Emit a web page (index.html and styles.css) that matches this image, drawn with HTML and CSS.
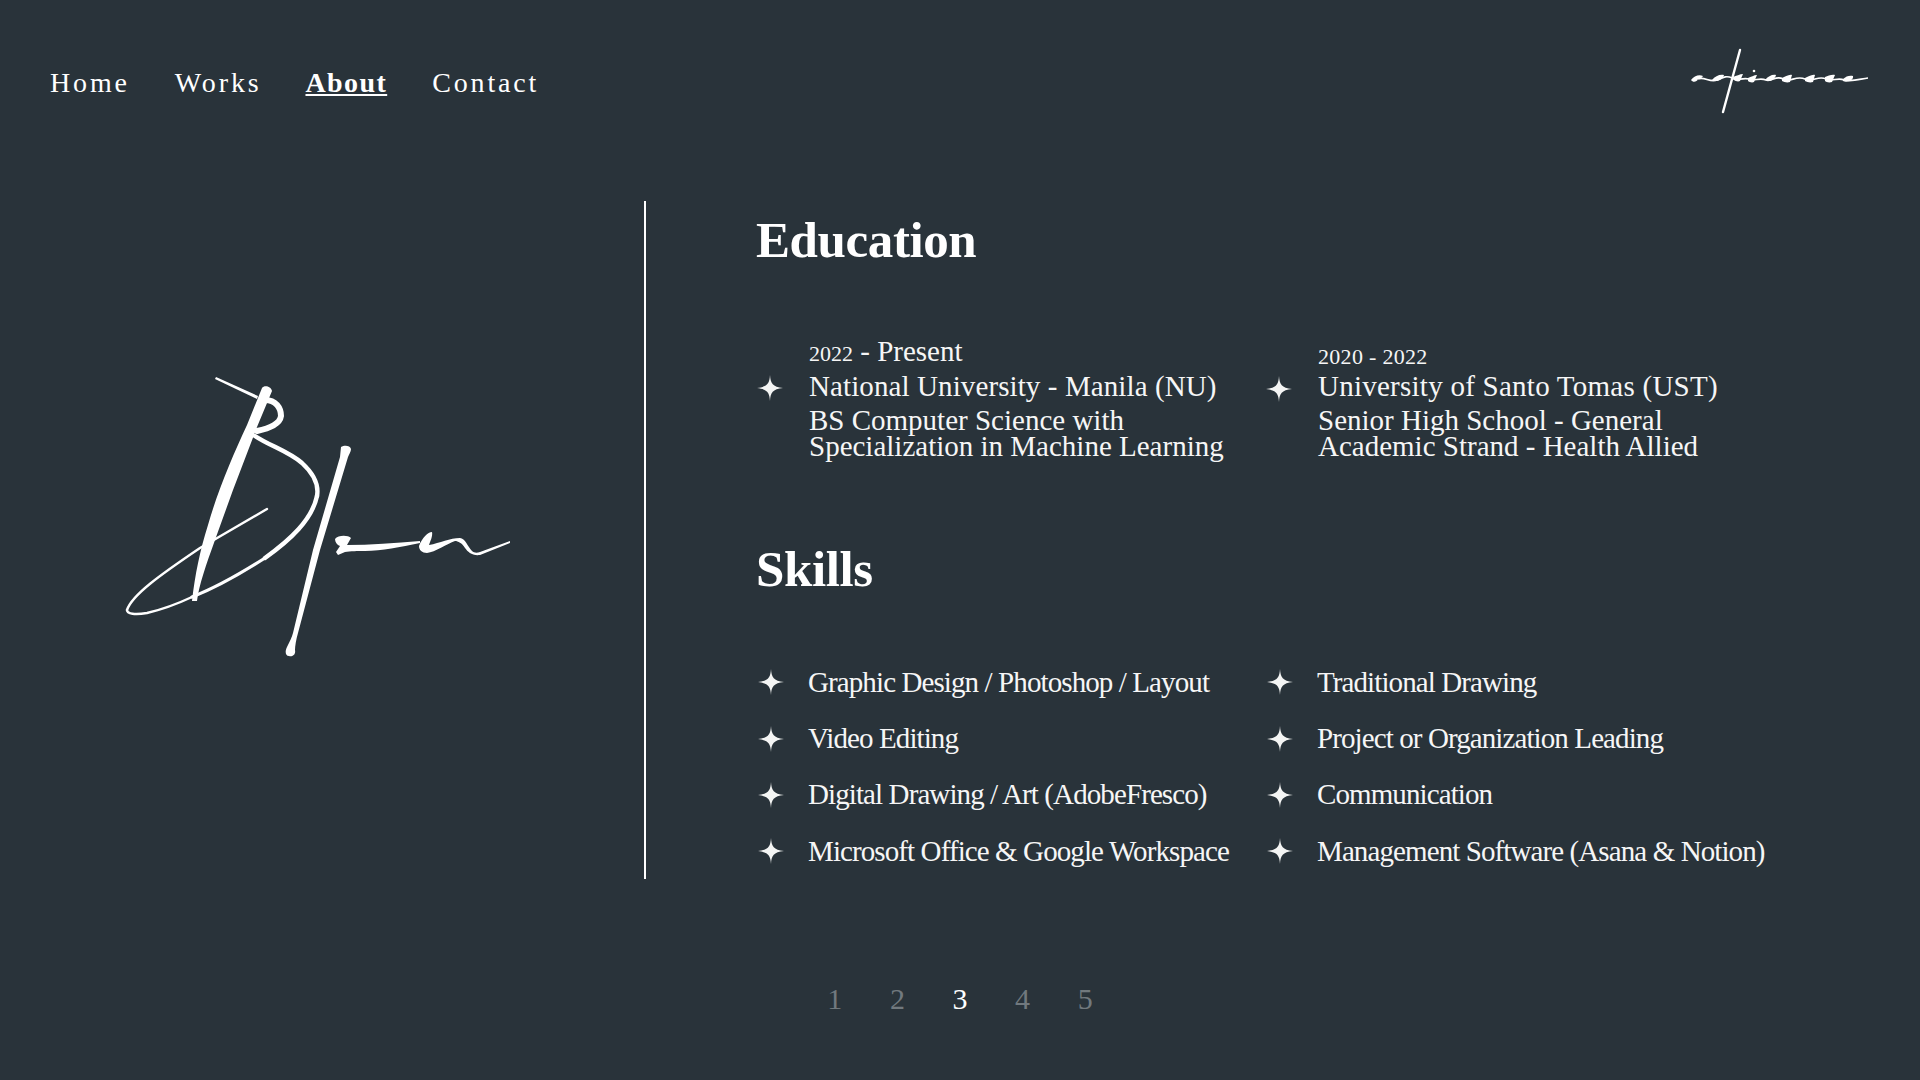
FILE: index.html
```html
<!DOCTYPE html>
<html lang="en">
<head>
  <meta charset="UTF-8" />
  <meta name="viewport" content="width=device-width, initial-scale=1" />
  <title>About</title>
  <link rel="stylesheet" href="styles.css">
</head>
<body>
  <svg class="defs" width="0" height="0">
    <symbol id="star" viewBox="0 0 26 26">
      <path d="M13 0 C13.6 8.5 15.5 11.8 26 13 C15.5 14.2 13.6 17.5 13 26 C12.4 17.5 10.5 14.2 0 13 C10.5 11.8 12.4 8.5 13 0 Z" />
    </symbol>
  </svg>

  <header class="topbar">
    <nav class="menu">
      <a href="#">Home</a>
      <a href="#">Works</a>
      <a href="#" class="active">About</a>
      <a href="#">Contact</a>
    </nav>
    <svg class="logo-small" viewBox="0 0 240 110" role="img" aria-label="adrianne logo">
      <path d="M31 50c3-4 8-6 12-4c-1 2-3 3-5 3c-1 3-5 4-7 1z" />
      <path d="M52 50c3-4 8-6 12-5c-1 4-7 8-12 5z" />
      <path d="M73 47c3-1 7-3 10-3l-3 7c-2 1-5 0-6-1z" />
      <path d="M88 48c3-1 6-3 9-3l-3 7c-2 1-5 0-6-1z" />
      <path d="M105 50c3-4 8-6 11-5c-1 4-6 8-11 5z" />
      <path d="M122 48c3-1 7-4 10-3l-2 7c-3 1-6 0-8-1z" />
      <path d="M145 48c3-1 7-4 10-3l-2 7c-3 1-6 0-8-1z" />
      <path d="M165 47c3-1 7-3 10-2l-3 7c-3 1-6 0-7-1z" />
      <path d="M183 49c3-3 7-4 10-3c1 4-6 7-10 5z" />
      <circle cx="94" cy="41" r="1.3" />
      <path class="line" d="M38 49 C44 46 50 53 57 50 C62 48 66 45 72 48 C76 52 82 47 89 49 C94 52 99 47 106 50 C112 52 116 45 123 49 C130 53 136 45 145 49 C152 53 158 45 166 49 C172 52 178 47 184 50 C192 52 200 49 208 48" />
      <path class="bar" d="M80 20 L63 82" />
    </svg>
  </header>

  <main class="about">
    <div class="signature">
      <svg class="logo-big" viewBox="0 0 440 330" role="img" aria-label="signature logo">
        <path d="M116 27 L158 46 L157 49 L115 29 Z" />
        <path d="M162 38 C164 35 171 36 172 41 L157 77 L133 140 L115 190 C106 215 99 235 97 251 L92 251 C95 225 100 200 108 175 C118 140 133 105 147 75 Z" />
        <path class="s5" d="M165 50 C176 50 181 58 181 66 C180 74 170 78 157 81" />
        <path class="s4" d="M155 86 C170 96 188 101 202 113 C214 124 219 135 217 146" />
        <path class="s4" d="M217 146 C212 170 190 190 165 208" />
        <path class="s3" d="M165 208 C140 224 115 238 92 247" />
        <path class="s2" d="M92 247 C75 255 60 260 47 263 C35 265 27 264 27 260" />
        <path class="s2" d="M27 260 C32 245 60 225 100 198 L167 159" />
        <path d="M241 97 C244 95 250 95 251 99 C251 102 249 104 248 107 L220 200 L198 283 C196 290 195 296 195 300 C196 305 192 307 189 306 C185 306 185 301 187 297 C190 291 192 287 193 283 L213 200 L240 107 Z" />
        <path d="M235 189 C238 185 248 185 251 188 L247 195 C270 195 295 193 320 191 L320 193 C300 197 282 201 265 201 C258 201 250 201 245 202 L238 205 L236 202 L240 196 C237 195 235 192 235 189 Z" />
        <path d="M319 196 C322 188 328 182 332 182 C333 186 330 192 329 195 C340 193 350 188 360 188 C365 188 368 197 372 201 C374 203 377 203 380 202 L410 191 L410 193 L380 205 C372 206 368 202 365 198 C362 193 358 191 355 191 C347 194 335 202 327 203 C322 203 319 200 319 196 Z" />
      </svg>
    </div>
    <div class="info">
      <section class="block">
        <h1>Education</h1>
        <div class="edu-grid">
          <div class="edu">
            <svg class="star"><use href="#star" /></svg>
            <div class="edu-text">
              <p class="years"><span class="num">2022</span> - Present</p>
              <p class="school">National University - Manila (NU)</p>
              <p class="course">BS Computer Science with<br>Specialization in Machine Learning</p>
            </div>
          </div>
          <div class="edu">
            <svg class="star"><use href="#star" /></svg>
            <div class="edu-text">
              <p class="years alt"><span class="num">2020 - 2022</span></p>
              <p class="school">University of Santo Tomas (UST)</p>
              <p class="course">Senior High School - General<br>Academic Strand - Health Allied</p>
            </div>
          </div>
        </div>
      </section>
      <section class="block skills">
        <h1>Skills</h1>
        <ul class="skill-grid">
          <li><svg class="star"><use href="#star" /></svg>Graphic Design / Photoshop / Layout</li>
          <li><svg class="star"><use href="#star" /></svg>Traditional Drawing</li>
          <li><svg class="star"><use href="#star" /></svg>Video Editing</li>
          <li><svg class="star"><use href="#star" /></svg>Project or Organization Leading</li>
          <li><svg class="star"><use href="#star" /></svg>Digital Drawing / Art (AdobeFresco)</li>
          <li><svg class="star"><use href="#star" /></svg>Communication</li>
          <li><svg class="star"><use href="#star" /></svg>Microsoft Office &amp; Google Workspace</li>
          <li><svg class="star"><use href="#star" /></svg>Management Software (Asana &amp; Notion)</li>
        </ul>
      </section>
    </div>
  </main>

  <footer class="pager">
    <a href="#">1</a>
    <a href="#">2</a>
    <a href="#" class="current">3</a>
    <a href="#">4</a>
    <a href="#">5</a>
  </footer>
</body>
</html>
```

FILE: styles.css
```css
html, body {
  margin: 0;
  padding: 0;
}
body {
  width: 1920px;
  height: 1080px;
  overflow: hidden;
  background-color: #29333a;
  color: #fff;
  font-family: "Liberation Serif", serif;
}
a {
  color: inherit;
  text-decoration: none;
}
p, h1, ul {
  margin: 0;
  padding: 0;
}
.defs {
  display: block;
  height: 0;
}

.topbar {
  display: flex;
  justify-content: space-between;
  height: 201px;
  padding-left: 50px;
  padding-right: 20px;
}
.menu {
  display: flex;
  gap: 45px;
  height: 165px;
  align-items: center;
  font-size: 28px;
  letter-spacing: 2.85px;
}
.menu .active {
  margin-left: -1px;
  font-weight: bold;
  letter-spacing: 1.4px;
  text-decoration: underline;
}
.logo-small {
  width: 240px;
  height: 110px;
  margin-top: 30px;
  fill: #fff;
}
.logo-small .line {
  fill: none;
  stroke: #fff;
  stroke-width: 1.7;
}
.logo-small .bar {
  fill: none;
  stroke: #fff;
  stroke-width: 2.4;
  stroke-linecap: round;
}

.about {
  display: flex;
  height: 678px;
}
.signature {
  width: 544px;
  height: 678px;
  padding-left: 100px;
  border-right: 2px solid #fff;
}
.logo-big {
  display: block;
  width: 440px;
  height: 330px;
  margin-top: 149px;
  fill: #fff;
}
.logo-big .s2, .logo-big .s3, .logo-big .s4, .logo-big .s5 {
  fill: none;
  stroke: #fff;
  stroke-linecap: round;
}
.logo-big .s2 { stroke-width: 2.4; }
.logo-big .s3 { stroke-width: 3.2; }
.logo-big .s4 { stroke-width: 4.4; }
.logo-big .s5 { stroke-width: 6; }

.info {
  padding-left: 110px;
  flex: 1;
}
h1 {
  font-size: 51px;
  line-height: 78px;
  font-weight: bold;
  letter-spacing: -0.4px;
}
.star {
  width: 26px;
  height: 26px;
  fill: #f4f5f4;
  flex: none;
}

.edu-grid {
  display: grid;
  grid-template-columns: 509px 1fr;
  margin-top: 53px;
}
.edu {
  display: flex;
  align-items: center;
  gap: 27px;
  font-size: 29px;
  color: #f6f6f6;
}
.edu .star {
  margin-left: 1px;
  margin-right: -1px;
  margin-bottom: 15px;
}
.edu:nth-child(2) .star {
  margin-bottom: 13px;
}
.years {
  padding-top: 4px;
  line-height: 30px;
}
.years .num {
  font-size: 22px;
}
.years.alt {
  padding-top: 10px;
  line-height: 24px;
  letter-spacing: 0.3px;
}
.school {
  line-height: 34px;
  letter-spacing: 0.1px;
}
.edu:nth-child(2) .school {
  letter-spacing: 0.25px;
}
.course {
  line-height: 26px;
  margin-top: 4px;
}

.skills {
  margin-top: 71px;
}
.skill-grid {
  list-style: none;
  display: grid;
  grid-template-columns: 509px 1fr;
  margin-top: 46px;
  font-size: 29px;
  letter-spacing: -0.9px;
  color: #f6f6f6;
}
.skill-grid li {
  display: flex;
  align-items: center;
  gap: 24px;
  height: 56.4px;
}
.skill-grid .star {
  margin-left: 2px;
}

.pager {
  display: flex;
  justify-content: center;
  gap: 47.6px;
  margin-top: 103px;
  font-size: 30px;
  color: #71797e;
}
.pager .current {
  color: #fff;
}
```
